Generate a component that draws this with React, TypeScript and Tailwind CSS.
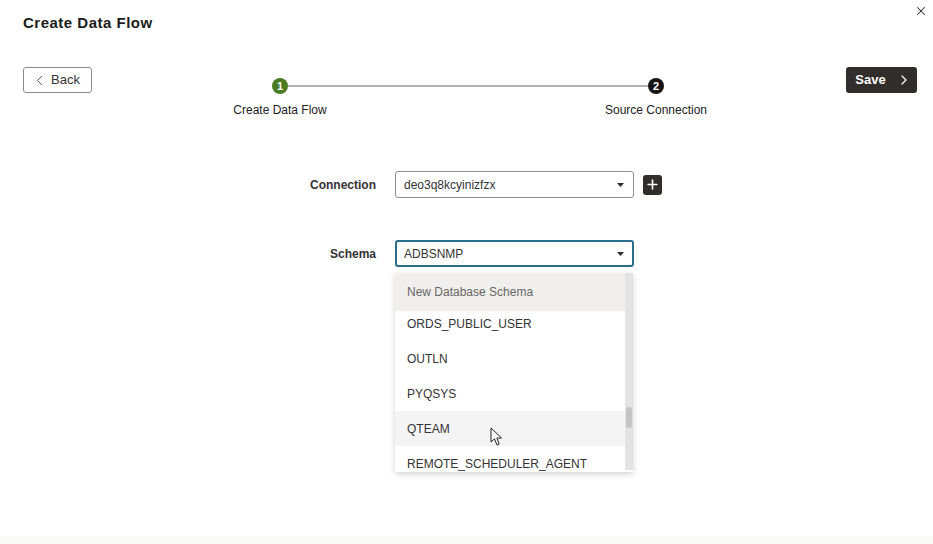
import { ChevronLeft, ChevronRight, X, Plus } from "lucide-react"

const items = ["ORDS_PUBLIC_USER", "OUTLN", "PYQSYS", "QTEAM", "REMOTE_SCHEDULER_AGENT"]

function Caret() {
  return (
    <svg width="7" height="4" viewBox="0 0 7 4" className="shrink-0">
      <path d="M0 0 L7 0 L3.5 4 Z" fill="#2b2b2b" />
    </svg>
  )
}

function Cursor() {
  return (
    <svg width="14" height="20" viewBox="0 0 14 20" className="absolute left-[95px] top-[16px]">
      <path
        d="M1 1 L1 15 L4.5 11.8 L7 18 L9.2 17 L6.8 11 L11.5 11 Z"
        fill="white"
        stroke="#222"
        strokeWidth="1"
        strokeLinejoin="round"
      />
    </svg>
  )
}

export default function App() {
  return (
    <div
      className="relative flex h-[544px] w-[933px] flex-col bg-white text-[#2b2b2b]"
      style={{ fontFamily: '"Liberation Sans", Arial, sans-serif' }}
    >
      {/* Close */}
      <button className="absolute right-[5px] top-[4px] text-[#2b2b2b]">
        <X className="h-[14px] w-[14px]" strokeWidth={1.8} />
      </button>

      <div className="flex-1">
        {/* Title */}
        <h1 className="pl-[23px] pt-[14px] text-[15px] font-bold leading-[18px] tracking-[0.5px] text-[#1c1c1c]">
          Create Data Flow
        </h1>

        {/* Toolbar + stepper */}
        <div className="mt-[35px] flex items-start pl-[23px] pr-[16px]">
          <button className="flex h-[26px] w-[69px] items-center justify-center gap-[3px] rounded-[3px] border border-[#8c8c8c] text-[13px] text-[#333]">
            <ChevronLeft className="-ml-[4px] h-[17px] w-[17px]" strokeWidth={1.2} />
            <span>Back</span>
          </button>

          <div className="ml-[132px] mt-[11px] w-[488px]">
            <div className="flex items-center px-[48px]">
              <div className="flex h-[16px] w-[16px] items-center justify-center rounded-full bg-[#4a7b21] text-[11px] font-bold text-white">
                1
              </div>
              <div className="h-[2px] flex-1 bg-[#b3b3b3]" />
              <div className="flex h-[16px] w-[16px] items-center justify-center rounded-full bg-[#161513] text-[11px] font-bold text-white">
                2
              </div>
            </div>
            <div className="mt-[9px] flex justify-between">
              <span className="w-[112px] text-center text-[12px] leading-[14px] text-[#222]">Create Data Flow</span>
              <span className="w-[112px] text-center text-[12px] leading-[14px] text-[#222]">Source Connection</span>
            </div>
          </div>

          <button className="ml-auto flex h-[26px] w-[71px] items-center justify-center gap-[10px] rounded-[3px] bg-[#312d2a] pl-[4px] text-[13px] font-bold text-white">
            <span>Save</span>
            <ChevronRight className="h-[16px] w-[16px]" strokeWidth={1.8} />
          </button>
        </div>

        {/* Form */}
        <div className="mt-[54px] pl-[256px]">
          <div className="flex items-center">
            <label className="mr-[19px] w-[120px] text-right text-[12px] font-bold text-[#333]">Connection</label>
            <div className="flex h-[27px] w-[239px] items-center justify-between rounded-[3px] border border-[#8e8e8e] pl-[8px] pr-[9px] text-[12px] text-[#333]">
              <span>deo3q8kcyinizfzx</span>
              <Caret />
            </div>
            <button className="ml-[9px] flex h-[20px] w-[19px] items-center justify-center rounded-[3px] bg-[#312d2a] text-white">
              <Plus className="h-[15px] w-[15px]" strokeWidth={2.6} />
            </button>
          </div>

          <div className="mt-[42px] flex items-center">
            <label className="mr-[19px] w-[120px] text-right text-[12px] font-bold text-[#333]">Schema</label>
            <div className="relative w-[239px]">
              <div className="flex h-[27px] w-full items-center justify-between rounded-[3px] border-2 border-[#2a6d8c] pl-[7px] pr-[8px] text-[12px] text-[#333]">
                <span>ADBSNMP</span>
                <Caret />
              </div>

              {/* Dropdown */}
              <div className="absolute left-0 top-[33px] z-10 flex h-[199px] w-[238px] bg-white shadow-[0_2px_6px_rgba(0,0,0,0.18)]">
                <div className="flex flex-1 flex-col overflow-hidden">
                  <div className="relative z-10 flex h-[38px] shrink-0 items-center bg-[#f1efed] pl-[12px] text-[12px] text-[#666]">
                    New Database Schema
                  </div>
                  <ul className="relative">
                    {items.map((name, i) => (
                      <li
                        key={name}
                        className={`relative flex h-[35px] items-center pl-[12px] text-[12px] text-[#333] ${
                          i === 0 ? "-mt-[5px]" : ""
                        } ${name === "QTEAM" ? "bg-[#f4f4f4]" : ""}`}
                      >
                        {name}
                        {name === "QTEAM" && <Cursor />}
                      </li>
                    ))}
                  </ul>
                </div>
                <div className="mb-[2px] w-[8px] bg-[#e3e3e3]">
                  <div className="ml-[1px] mt-[134px] h-[21px] w-[6px] rounded-[3px] bg-[#c4c4c4]" />
                </div>
              </div>
            </div>
          </div>
        </div>
      </div>

      <div className="h-[8px] bg-[#fafaf8]" />
    </div>
  )
}
